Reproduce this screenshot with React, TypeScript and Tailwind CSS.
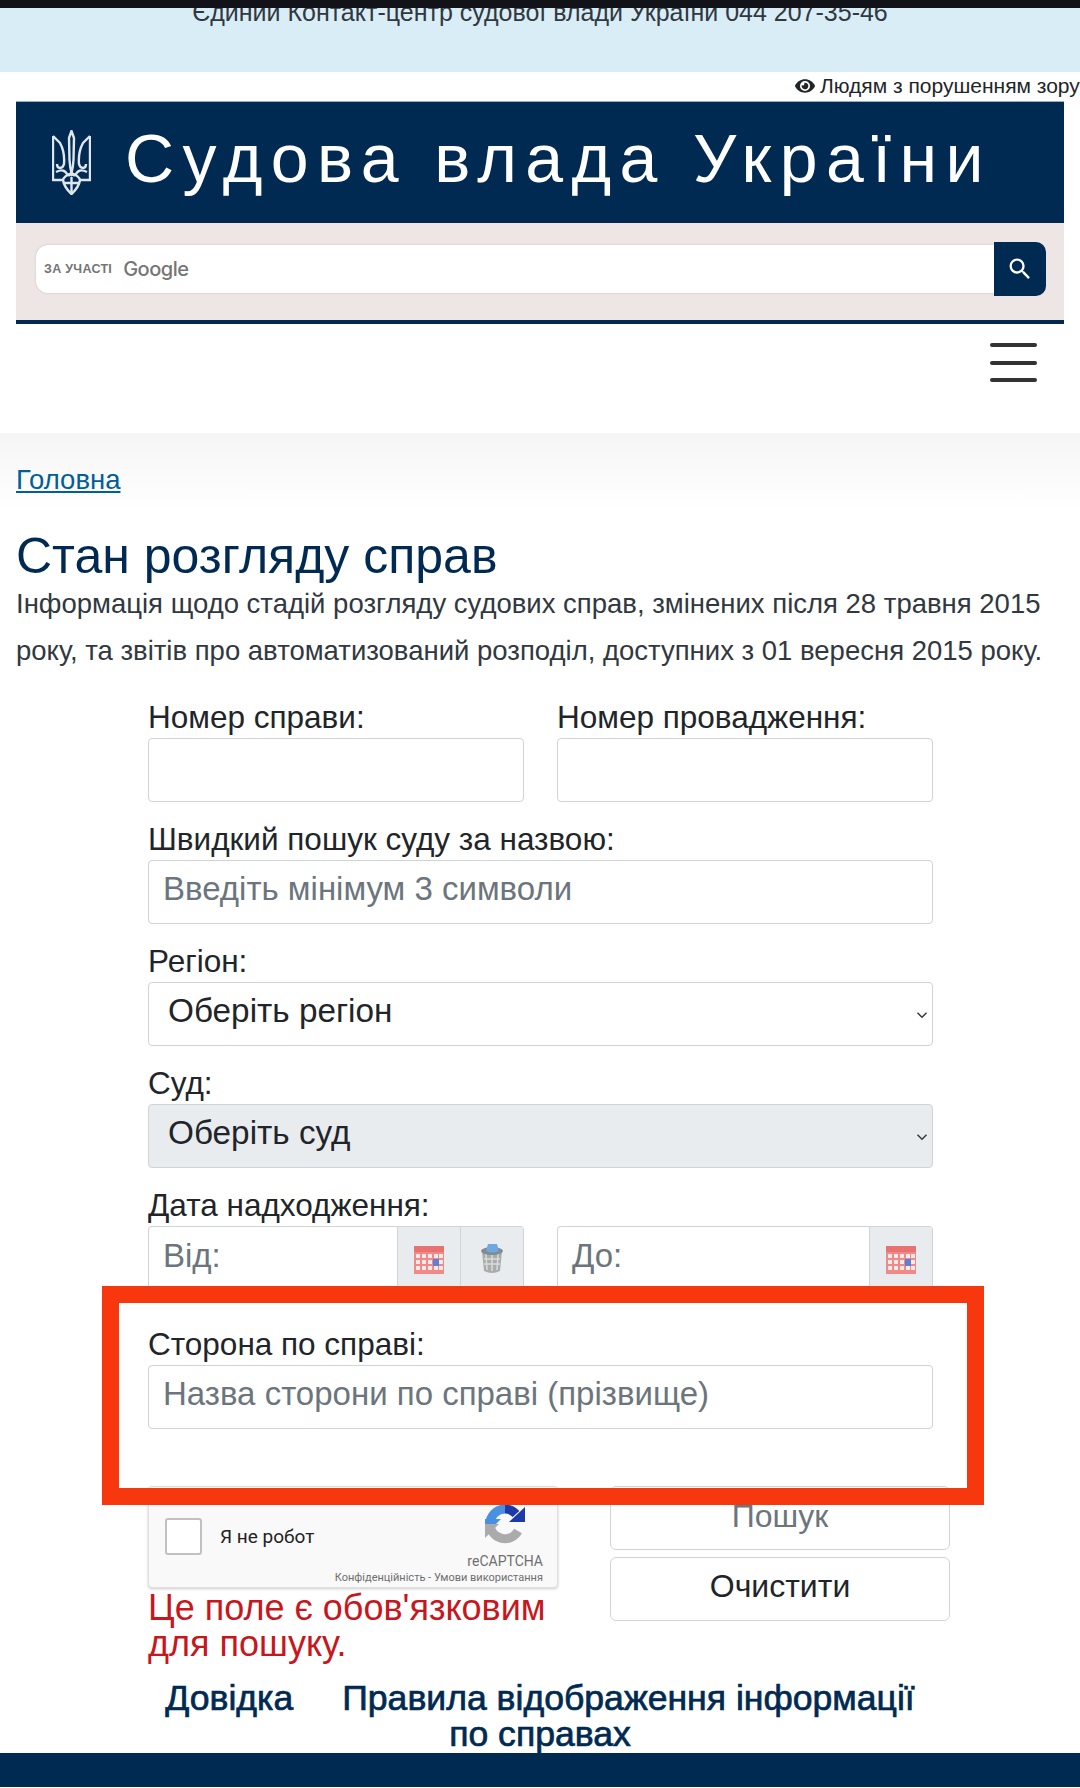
import React from "react";
import { FaEye } from "react-icons/fa";

const Trident = () => (
  <svg width="39" height="65" viewBox="0 0 39 65" fill="none" stroke="#dfe6ee" strokeWidth="2.4">
    <path d="M19.5 1 L17 8 L17.5 30 Q18 38 19.5 43 Q21 38 21.5 30 L22 8 Z" />
    <path d="M1 6 L8 13 Q13 22 12 34 Q11 38 8 38 Q5 38 5 34 M1 6 V50 H11" />
    <path d="M38 6 L31 13 Q26 22 27 34 Q28 38 31 38 Q34 38 34 34 M38 6 V50 H28" />
    <path d="M4 42 Q12 38 15 44 Q17 47 19.5 43 Q22 47 24 44 Q27 38 35 42" />
    <path d="M11 50 Q12 57 19.5 64 Q27 57 28 50 Q27 46 19.5 43 Q12 46 11 50 Z" />
    <path d="M19.5 47 V62 M12 53 H27" />
  </svg>
);

const Calendar = () => (
  <svg width="30" height="29" viewBox="0 0 30 29">
    <rect x="0" y="1" width="30" height="28" fill="#f08a88" />
    <rect x="0" y="1" width="30" height="6" fill="#e87270" />
    {[9, 15, 21].map((y) =>
      [2, 8, 14, 20, 25].map((x) => <rect key={`${x}-${y}`} x={x} y={y} width="4" height="4" fill="#fde9e8" />)
    )}
    <rect x="19" y="14" width="6" height="7" fill="#5f80d8" />
  </svg>
);

const Trash = () => (
  <svg width="26" height="31" viewBox="0 0 26 31">
    <path d="M3 8 L5 28 Q13 32 21 28 L23 8 Z" fill="#a9acab" />
    <path d="M7 11 L8 27 M13 11 V28 M19 11 L18 27 M5 16 H21 M5 21 H21" stroke="#d9dbda" strokeWidth="1.5" />
    <ellipse cx="13" cy="8" rx="11" ry="4" fill="#7f8c90" />
    <path d="M7 8 L9 1 H18 L20 8 Q13 11 7 8 Z" fill="#6fa8e0" />
  </svg>
);

const Recaptcha = () => (
  <svg width="40" height="40" viewBox="0 0 40 40" fill="none">
    <path d="M5 20 A15 15 0 0 1 20 5" stroke="#4a90e2" strokeWidth="9" />
    <path d="M0 15 H16 L10 21 H0 Z" fill="#4a90e2" />
    <path d="M20 5 A15 15 0 0 1 31 10" stroke="#1c3aa9" strokeWidth="9" />
    <path d="M40 3 V18 H24 Z" fill="#1c3aa9" />
    <path d="M5 21 A15 15 0 0 0 33 27" stroke="#ababab" strokeWidth="9" />
    <path d="M0 20 H14 L0 34 Z" fill="#ababab" />
  </svg>
);

const Chevron = () => (
  <svg className="absolute right-[4px] top-[26px]" width="12" height="12" viewBox="0 0 16 16" fill="none" stroke="#343a40" strokeWidth="2">
    <path d="M2 5 L8 11 L14 5" />
  </svg>
);

const Label = ({ children }: { children: React.ReactNode }) => (
  <div className="mt-4 h-[42px] whitespace-nowrap text-[31.5px] leading-[42px] text-[#212529]">{children}</div>
);

const TextInput = ({ placeholder }: { placeholder?: string }) => (
  <input
    placeholder={placeholder}
    className="block h-[64px] w-full rounded border border-[#ced4da] bg-white px-[14px] pb-[6px] text-[33px] text-[#495057] placeholder:text-[#6c757d]"
  />
);

const SelectBox = ({ text, disabled }: { text: string; disabled?: boolean }) => (
  <div className={`relative flex h-[64px] items-center rounded border border-[#ced4da] pb-[6px] pl-[19px] text-[33.3px] text-[#212529] ${disabled ? "bg-[#e9ecef]" : "bg-white"}`}>
    {text}
    <Chevron />
  </div>
);

const DateInput = ({ placeholder, trash }: { placeholder: string; trash?: boolean }) => (
  <div className="flex h-[64px] rounded-t border border-b-0 border-[#ced4da]">
    <div className="flex-1 px-[14px] pt-[10px] text-[33px] leading-[38px] text-[#6c757d]">{placeholder}</div>
    <div className="flex w-[63px] items-center justify-center border-l border-[#ced4da] bg-[#e9ecef] pt-[2px]">
      <Calendar />
    </div>
    {trash && (
      <div className="flex w-[63px] items-center justify-center border-l border-[#ced4da] bg-[#e9ecef]">
        <Trash />
      </div>
    )}
  </div>
);

export default function App() {
  return (
    <div className="relative h-[1788px] w-[1080px] overflow-hidden bg-white font-['Liberation_Sans',Arial,sans-serif] text-[#212529]">
      <div className="absolute left-0 top-0 z-10 h-[8px] w-full bg-[#111318]" />

      <div className="h-[72px] bg-[#d9edf7] text-center text-[25px] leading-[24px] text-[#31383f]">
        Єдиний Контакт-центр судової влади України 044 207-35-46
      </div>

      <div className="flex h-[29px] items-center gap-[5px] overflow-hidden whitespace-nowrap pb-[2px] pl-[795px] text-[21px] text-[#212529]">
        <FaEye className="shrink-0 text-[20px]" />
        <span>Людям з порушенням зору</span>
      </div>

      <div className="px-4">
        <div className="flex h-[122px] items-center border-t border-[#8fb0c8] bg-[#012a52] pl-9">
          <Trident />
          <div className="ml-[34px] whitespace-nowrap pb-[10px] text-[68px] tracking-[8.4px] text-white">Судова влада України</div>
        </div>
        <div className="flex h-[97px] items-center bg-[#ede6e4] pb-[5px] pl-5 pr-[18px]">
          <div className="flex h-[48px] flex-1 items-center rounded-l-[12px] bg-white pl-[8px] shadow-[0_0_2px_rgba(0,0,0,0.2)]">
            <span className="text-[12.5px] font-bold tracking-[0.3px] text-[#757575]">ЗА УЧАСТІ</span>
            <span className="ml-[11px] font-['Inter',sans-serif] text-[20px] font-medium tracking-[-0.5px] text-[#757575]">Google</span>
          </div>
          <div className="flex h-[54px] w-[52px] items-center justify-center rounded-r-[10px] bg-[#012a52]">
            <svg width="28" height="28" viewBox="0 0 24 24" fill="white">
              <path d="M15.5 14h-.79l-.28-.27A6.47 6.47 0 0 0 16 9.5 6.5 6.5 0 1 0 9.5 16c1.61 0 3.09-.59 4.23-1.57l.27.28v.79l5 4.99L20.49 19l-4.99-5zm-6 0C7.01 14 5 11.99 5 9.5S7.01 5 9.5 5 14 7.01 14 9.5 11.99 14 9.5 14z" />
            </svg>
          </div>
        </div>
        <div className="h-1 bg-[#012a52]" />
      </div>

      <div className="flex h-[109px] justify-end pr-[43px] pt-[19px]">
        <div className="flex h-[39px] w-[47px] flex-col justify-between">
          <div className="h-[4px] rounded-full bg-[#333]" />
          <div className="h-[4px] rounded-full bg-[#333]" />
          <div className="h-[4px] rounded-full bg-[#333]" />
        </div>
      </div>

      <div className="h-[77px] bg-gradient-to-b from-[#f5f5f5] to-white pl-4 pt-[28px] text-[27.5px] leading-[38px] text-[#005f99] underline">
        Головна
      </div>

      <div className="px-4">
        <h1 className="mt-[23px] text-[50px] leading-[47px] text-[#002a52]">Стан розгляду справ</h1>
        <p className="text-[27.5px] leading-[47px] text-[#31383f]">
          Інформація щодо стадій розгляду судових справ, змінених після 28 травня 2015 року, та звітів про автоматизований розподіл, доступних з 01 вересня 2015 року.
        </p>
      </div>

      <div className="mt-[6px] w-[933px] pl-[148px]">
        <div className="grid grid-cols-2 gap-x-[33px]">
          <div>
            <Label>Номер справи:</Label>
            <TextInput />
          </div>
          <div>
            <Label>Номер провадження:</Label>
            <TextInput />
          </div>
        </div>
        <Label>Швидкий пошук суду за назвою:</Label>
        <TextInput placeholder="Введіть мінімум 3 символи" />
        <Label>Регіон:</Label>
        <SelectBox text="Оберіть регіон" />
        <Label>Суд:</Label>
        <SelectBox text="Оберіть суд" disabled />
        <Label>Дата надходження:</Label>
        <div className="grid grid-cols-2 gap-x-[33px]">
          <DateInput placeholder="Від:" trash />
          <DateInput placeholder="До:" />
        </div>
        <div className="mt-[33px]">
          <Label>Сторона по справі:</Label>
          <TextInput placeholder="Назва сторони по справі (прізвище)" />
        </div>
      </div>

      <div className="mt-[57px] flex pl-[148px]">
        <div className="w-[410px]">
          <div className="flex h-[102px] rounded border border-[#e0e0e0] bg-[#f9f9f9] pl-[16px] shadow-[0_1px_3px_rgba(0,0,0,0.2)]">
            <div className="mt-[31px] h-[37px] w-[37px] rounded-[3px] border-2 border-[#c1c1c1] bg-white" />
            <div className="ml-[18px] mt-[39px] font-['Roboto',sans-serif] text-[19px] leading-[22px] text-[#222]">Я не робот</div>
            <div className="ml-auto flex flex-col items-end pr-[14px] pt-[17px] font-['Roboto',sans-serif] text-[#6f6f6f]">
              <div className="mr-[18px]"><Recaptcha /></div>
              <div className="mt-[9px] text-[14px] leading-[16px]">reCAPTCHA</div>
              <div className="mt-[2px] whitespace-nowrap text-[11px] leading-[14px]">Конфіденційність - Умови використання</div>
            </div>
          </div>
          <div className="mt-[2px] text-[36px] leading-[36px] text-[#c8161d]">Це поле є обов'язковим для пошуку.</div>
        </div>
        <div className="ml-[52px] flex w-[340px] flex-col gap-[7px]">
          <div className="flex h-[64px] items-center justify-center rounded-md border border-[#ced4da] pb-[6px] pt-[1px] text-[32px] text-[#6c757d]">Пошук</div>
          <div className="flex h-[64px] items-center justify-center rounded-md border border-[#ced4da] pb-[6px] text-[32px] text-[#212529]">Очистити</div>
        </div>
      </div>

      <div className="mx-auto mt-[18px] w-[775px] pb-[1px] text-center text-[35.6px] font-medium leading-[36px] text-[#002a52] [-webkit-text-stroke:0.7px_#002a52]">
        <span className="mr-[49px]">Довідка</span>
        <span>Правила відображення інформації по справах</span>
      </div>

      <div className="h-[34px] bg-[#012a52]" />

      <div className="absolute left-[102px] top-[1286px] h-[219px] w-[882px] border-[17px] border-[#f7380f]" />
    </div>
  );
}
